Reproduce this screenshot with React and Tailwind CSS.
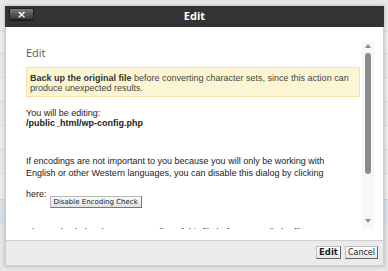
import React from 'react';

// Background rows of the page behind the modal
const BG_ROWS = [
  { h: 'h-[31px]', cls: 'bg-[#e6e6e6]' },
  { h: 'h-[22px]', cls: 'bg-[#ececec] border-t border-[#dcdcdc]' },
  { h: 'h-[24px]', cls: 'bg-[#e9e9e9] border-t border-[#dcdcdc]' },
  { h: 'h-[24px]', cls: 'bg-[#ececec] border-t border-[#dcdcdc]' },
  { h: 'h-[24px]', cls: 'bg-[#e9e9e9] border-t border-[#dcdcdc]' },
  { h: 'h-[24px]', cls: 'bg-[#ececec] border-t border-[#dcdcdc]' },
  { h: 'h-[24px]', cls: 'bg-[#e9e9e9] border-t border-[#dcdcdc]' },
  { h: 'h-[26px]', cls: 'bg-[#ececec] border-t border-[#dcdcdc]' },
  { h: 'h-[24px]', cls: 'bg-[#d9dfe6] border-t border-[#d0d6dd]' },
  { h: 'h-[50px]', cls: 'bg-[#e4e4e4] border-t border-[#dcdcdc]' },
];

function Scrollbar() {
  return (
    <div className="w-[12px] h-full bg-[#f8f8f8] flex flex-col items-center pt-[2px] pb-[6px]">
      <div className="w-0 h-0 border-l-[3px] border-r-[3px] border-b-[4px] border-l-transparent border-r-transparent border-b-[#8c8c8c] mt-[1px]" />
      <div className="w-[6px] h-[121px] bg-[#8c8c8c] rounded-full mt-[5px]" />
      <div className="flex-1" />
      <div className="w-0 h-0 border-l-[3px] border-r-[3px] border-t-[4px] border-l-transparent border-r-transparent border-t-[#8c8c8c]" />
    </div>
  );
}

export default function App() {
  return (
    <div className="w-[388px] h-[271px] relative overflow-hidden bg-[#e6e6e6] font-['Liberation_Sans',Arial,sans-serif]">
      {/* Page behind */}
      <div className="flex flex-col">
        {BG_ROWS.map((r, i) => (
          <div key={i} className={`${r.h} ${r.cls}`} />
        ))}
      </div>

      {/* Modal */}
      <div className="absolute left-[5px] top-[6px] w-[379px] flex flex-col shadow-[0_0_3px_rgba(0,0,0,0.25)]">
        {/* Header */}
        <div className="h-[21px] bg-[#333333] relative flex items-center justify-center">
          <button
            type="button"
            className="absolute left-[4px] top-[2px] w-[25px] h-[12px] rounded-[2px] bg-gradient-to-b from-[#7a7a7a] to-[#3a3a3a] border border-[#222] shadow-[0_1px_1px_rgba(0,0,0,0.5)] flex items-center justify-center text-white text-[11px] leading-none font-bold font-['DejaVu_Sans',sans-serif]"
          >
            ×
          </button>
          <span className="text-white text-[11px] font-bold font-['Open_Sans',sans-serif]">Edit</span>
        </div>

        {/* Body */}
        <div className="h-[213px] bg-white border-l border-r border-[#cfcfcf] flex pt-[14px] pl-[20px]">
          <div className="w-[334px] h-[188px] overflow-hidden text-[#222]">
            <div className="mt-[4px] text-[11px] leading-[16px] text-[#555] font-['Open_Sans',sans-serif]">Edit</div>

            <div className="mt-[6px] bg-[#fcf5d3] border border-[#f1e3a6] pl-[3px] pr-[2px] pt-[5px] pb-[3px] text-[9px] leading-[10px] text-[#444]">
              <b className="text-[#333]">Back up the original file</b> before converting character sets, since this action can produce unexpected results.
            </div>

            <div className="mt-[11px] text-[9px] leading-[10px]">
              <div>You will be editing:</div>
              <div className="font-bold">/public_html/wp-config.php</div>
            </div>

            <div className="mt-[27px] text-[9px] leading-[12px] text-[#222] pr-[6px]">
              If encodings are not important to you because you will only be working with English or other Western languages, you can disable this dialog by clicking
            </div>

            <div className="mt-[9px] flex items-start text-[9px] leading-[12px]">
              <span>here:</span>
              <button
                type="button"
                className="ml-[3px] mt-[8px] h-[12px] px-[3px] bg-gradient-to-b from-[#fafafa] to-[#e2e2e2] border border-[#b5b5b5] border-r-[#777] border-b-[#777] text-[7px] leading-[10px] text-[#222] font-['DejaVu_Sans',sans-serif]"
              >
                Disable Encoding Check
              </button>
            </div>

            <div className="mt-[18px] text-[9px] leading-[12px]">
              Please check the character encoding of this file before you edit the file.
            </div>
          </div>
          <div className="w-[2px]" />
          <div className="h-[188px]">
            <Scrollbar />
          </div>
        </div>

        {/* Footer */}
        <div className="h-[26px] bg-[#ebebeb] border border-[#cfcfcf] flex items-center justify-end gap-[4px] pr-[5px] pb-[2px]">
          <button
            type="button"
            className="h-[13px] px-[2px] bg-gradient-to-b from-[#ffffff] to-[#e6e6e6] border border-[#bdbdbd] border-r-[#666] border-b-[#666] text-[8.5px] leading-[11px] font-bold text-[#222] font-['DejaVu_Sans',sans-serif]"
          >
            Edit
          </button>
          <button
            type="button"
            className="h-[13px] px-[2px] bg-gradient-to-b from-[#ffffff] to-[#e6e6e6] border border-[#bdbdbd] border-r-[#666] border-b-[#666] text-[8px] leading-[11px] text-[#222] font-['DejaVu_Sans',sans-serif]"
          >
            Cancel
          </button>
        </div>
      </div>
    </div>
  );
}
